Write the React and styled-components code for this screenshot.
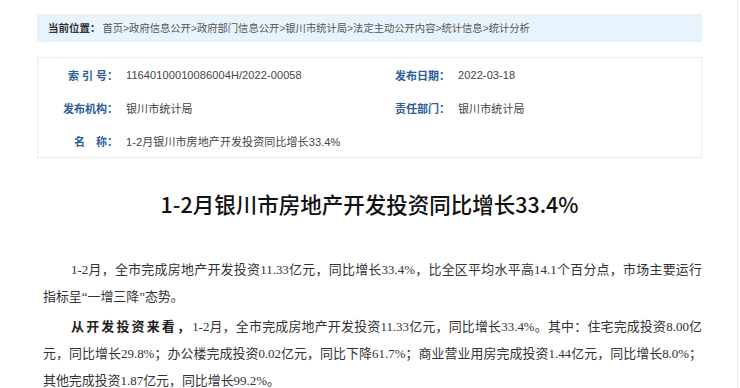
import React from "react";
import styled, { createGlobalStyle } from "styled-components";

const GlobalStyle = createGlobalStyle`
  html, body {
    margin: 0;
    padding: 0;
    background: #fff;
  }
  body {
    font-family: "Liberation Sans", "Noto Sans CJK SC", sans-serif;
  }
`;

const crumbs = [
  "首页",
  "政府信息公开",
  "政府部门信息公开",
  "银川市统计局",
  "法定主动公开内容",
  "统计信息",
  "统计分析",
];

const meta = [
  { label: "索 引 号：", value: "11640100010086004H/2022-00058" },
  { label: "发布日期：", value: "2022-03-18" },
  { label: "发布机构：", value: "银川市统计局" },
  { label: "责任部门：", value: "银川市统计局" },
  { label: "名　称：", value: "1-2月银川市房地产开发投资同比增长33.4%" },
];

export default function App() {
  return (
    <>
      <GlobalStyle />
      <Page>
        <Content>
          <Breadcrumb>
            <CrumbTitle>当前位置：</CrumbTitle>
            {crumbs.map((c, i) => (
              <React.Fragment key={c}>
                {i > 0 && <Sep>&gt;</Sep>}
                <Crumb>{c}</Crumb>
              </React.Fragment>
            ))}
          </Breadcrumb>

          <MetaBox>
            {meta.map((m) => (
              <React.Fragment key={m.label}>
                <MetaLabel>{m.label}</MetaLabel>
                <MetaValue>{m.value}</MetaValue>
              </React.Fragment>
            ))}
          </MetaBox>

          <Title>1-2月银川市房地产开发投资同比增长33.4%</Title>

          <Article>
            <Para>
              1-2月，全市完成房地产开发投资11.33亿元，同比增长33.4%，比全区平均水平高14.1个百分点，市场主要运行指标呈“一增三降”态势。
            </Para>
            <Para>
              <Lead>从开发投资来看，</Lead>
              1-2月，全市完成房地产开发投资11.33亿元，同比增长33.4%。其中：住宅完成投资8.00亿元，同比增长29.8%；办公楼完成投资0.02亿元，同比下降61.7%；商业营业用房完成投资1.44亿元，同比增长8.0%；其他完成投资1.87亿元，同比增长99.2%。
            </Para>
          </Article>
        </Content>
      </Page>
    </>
  );
}

const Page = styled.div`
  width: 737px;
  min-height: 100vh;
  border-right: 1px solid #ececec;
`;

const Content = styled.div`
  width: 665px;
  padding: 14px 0 0 37px;
`;

const Breadcrumb = styled.div`
  height: 28px;
  line-height: 28px;
  background: #e8f4fd;
  padding-left: 11px;
  font-size: 10.3px;
  color: #555;
  white-space: nowrap;
`;

const CrumbTitle = styled.span`
  font-weight: 700;
  font-size: 10.5px;
  color: #333;
  margin-right: 2px;
`;

const Crumb = styled.span`
  color: #555;
`;

const Sep = styled.span`
  color: #666;
`;

const MetaBox = styled.div`
  margin-top: 15px;
  border: 1px solid #ebebeb;
  height: 99px;
  display: grid;
  grid-template-columns: 88px 242px 90px 1fr;
  grid-auto-rows: 33px;
  align-items: center;
  font-size: 11px;
`;

const MetaLabel = styled.div`
  padding-right: 8px;
  text-align: right;
  font-weight: 700;
  color: #2c5c99;
  white-space: nowrap;
`;

const MetaValue = styled.div`
  color: #444;
  white-space: nowrap;
  letter-spacing: 0.1px;
`;

const Title = styled.h1`
  margin: 30px 0 0;
  text-align: center;
  font-family: "Noto Sans CJK SC", sans-serif;
  font-size: 21.5px;
  line-height: 32px;
  font-weight: 500;
  color: #111;
`;

const Article = styled.div`
  margin-top: 36px;
  padding-left: 6px;
  width: 659px;
  font-family: "Liberation Serif", "Noto Sans CJK SC", serif;
  font-size: 12.93px;
  line-height: 27px;
  color: #333;
`;

const Para = styled.p`
  margin: 0 0 3px;
  text-indent: 28px;
  text-align: justify;
`;

const Lead = styled.strong`
  font-weight: 700;
  letter-spacing: 2px;
  color: #222;
`;
